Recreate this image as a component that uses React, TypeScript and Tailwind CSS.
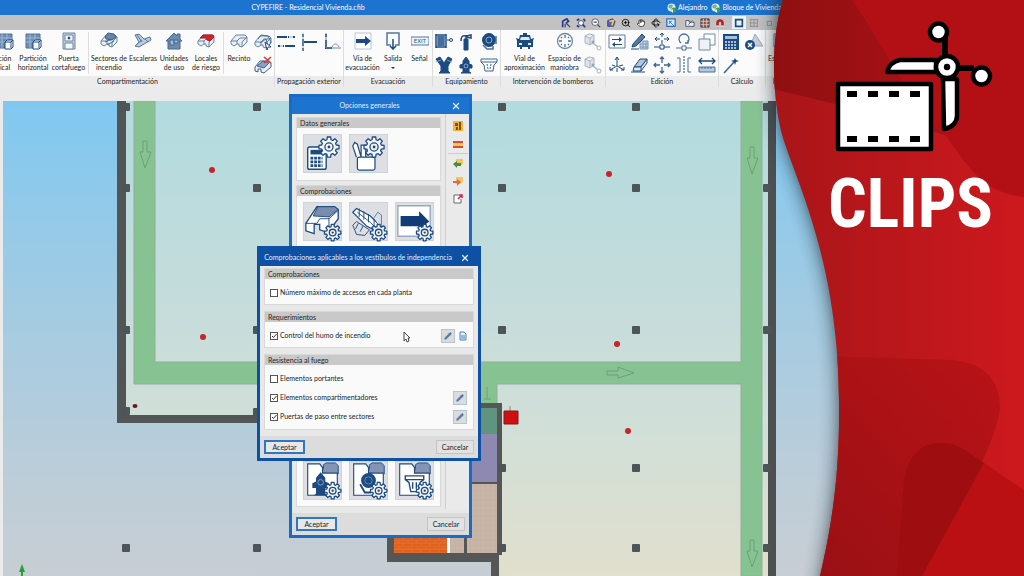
import { useState } from 'react';
import type { ReactNode } from 'react';
import { Hand, Pencil, Rotate3d, X, ZoomIn } from 'lucide-react';

const NAVY = '#1c4a82';

const gearPath = (cx: number, cy: number, outer: number, inner: number) => {
  const points: string[] = [];
  for (let i = 0; i < 8; i++) {
    const base = (i * Math.PI) / 4;
    [
      [-0.27, inner],
      [-0.17, outer],
      [0.17, outer],
      [0.27, inner],
    ].forEach(([offset, r]) => {
      points.push(`${(cx + r * Math.cos(base + offset)).toFixed(2)} ${(cy + r * Math.sin(base + offset)).toFixed(2)}`);
    });
  }
  return `M${points.join('L')}Z`;
};

const Gear = ({ cx, cy, r }: { cx: number; cy: number; r: number }) => (
  <g stroke={NAVY} strokeWidth="1.4" strokeLinejoin="round" fill="#f4f5f7">
    <path d={gearPath(cx, cy, r, r * 0.74)} />
    <circle cx={cx} cy={cy} r={r * 0.4} />
    <circle cx={cx} cy={cy} r={r * 0.14} fill={NAVY} stroke="none" />
  </g>
);

const Icon = ({ children }: { children: ReactNode }) => (
  <svg viewBox="0 0 18 18" className="h-[18px] w-[18px] shrink-0" fill="none" stroke={NAVY} strokeWidth="1" aria-hidden="true">
    {children}
  </svg>
);

const block = (
  <>
    <path d="M1 9L6 3h9l2 2v5l-5 5-3-1v-2H7l-3 2-3-2z" fill="#e8eef5" stroke="#6884a3" />
    <path d="M1 9h6l3-3h6M7 9v3M12 15v-5l5-5" stroke="#6884a3" />
  </>
);

const icons: Record<string, ReactNode> = {
  partition: (
    <Icon>
      <path d="M2 2h14v8H9v6H2z" fill="#6f8fb3" stroke="#4e7097" />
      <path d="M2 6h14M2 10h7M6 2v14M11 2v6" stroke="#9fb6cf" />
      <path d="M9 16v-6l2-2h6v7l-2 2H9zM9 10h6v6M15 10l2-2" fill="#fff" />
    </Icon>
  ),
  door: (
    <Icon>
      <path d="M3 1h12v16H3z" fill="#c2cfdd" stroke="#7289a4" />
      <path d="M5 3h8v6H5zM5 11h8v6H5z" fill="#f5f8fb" stroke="#7289a4" />
      <circle cx="9" cy="6" r="1" fill={NAVY} />
    </Icon>
  ),
  sectors: (
    <Icon>
      {block}
      <path d="M5 5l3-4 6 1 2 3-4 3-6-1z" fill="#6683a8" stroke="#3b5d87" />
      <path d="M5 10l8-3M7 13l7-4" stroke="#47698f" />
    </Icon>
  ),
  stairs: (
    <Icon>
      <path d="M1 3l4-1 5 5 6-2 1 3-7 4-5 3-4-1 4-4z" fill="#b9cade" stroke="#55779e" />
      <path d="M3 3l5 7M2 13l6-5M11 7l3 3" stroke="#55779e" />
    </Icon>
  ),
  house: (
    <Icon>
      <path d="M1 9l8-8 3 3V2h3v5l2 2h-2v8H3V9z" fill="#6d8bae" stroke="#47698f" />
      <path d="M5 8h4v5H5zM9 8h4v3H9z" fill="#a6bbd2" stroke="#47698f" />
    </Icon>
  ),
  risk: (
    <Icon>
      {block}
      <path d="M3 6l3-3h10l1 2-4 4-3-1-1-2H4z" fill="#d2222a" stroke="#b3161d" />
    </Icon>
  ),
  enclosure: <Icon>{block}</Icon>,
  enclosures: (
    <Icon>
      {block}
      <path d="M4 6l3-4 7 1 3 6-2 4M6 10l6-4 2 7" stroke="#47698f" />
      <path d="M11 9l6 5h-3l-1 3z" fill="#fff" />
    </Icon>
  ),
  removeEnclosure: (
    <Icon>
      <path d="M1 11l5-6h8l3 2v4l-7 6-3-1v-3H4v3l-3-1z" fill="#e8eef5" stroke="#3f6088" />
      <path d="M3 10l6-5 6 2-5 5z" fill="#8aa2be" stroke="#3f6088" />
      <path d="M10 1l7 6M17 1l-7 6" stroke="#d23a3a" strokeWidth="1.6" />
    </Icon>
  ),
  facadeH: (
    <Icon>
      <path d="M0 4h10M8 13h10" strokeWidth="2" />
      <path d="M12 4h6M1 13h6" stroke="#9fb4ca" />
      <path d="M11 4h1M16 4h2M1 13h2M6 13h1" strokeWidth="2" />
    </Icon>
  ),
  facadeV: (
    <Icon>
      <path d="M3 1v3M3 6v7M3 15v3" strokeWidth="2" />
      <path d="M3 9h14" strokeWidth="2" />
      <path d="M3 0v18" stroke="#9fb4ca" />
    </Icon>
  ),
  facadeCorner: (
    <Icon>
      <path d="M3 1v3M3 7v8h6" strokeWidth="2" />
      <path d="M3 0v15h15M9 14c2-4 5-4 7 0" stroke="#6f8cab" />
    </Icon>
  ),
  route: (
    <Icon>
      <path d="M1 1h16v16H1z" fill="#fff" stroke="#b6c4d4" />
      <path d="M2 7h9V4l6 5-6 5v-3H2z" fill={NAVY} stroke="none" />
    </Icon>
  ),
  exit: (
    <Icon>
      <path d="M7 13H3V1h12v12h-4" stroke="#55779e" strokeWidth="1.5" />
      <path d="M9 7v10M6 14l3 3 3-3" strokeWidth="1.5" />
    </Icon>
  ),
  sign: (
    <svg viewBox="0 0 18 18" className="h-[18px] w-[18px]" aria-hidden="true">
      <path d="M0 5h18v8H0z" fill="#edf3fa" stroke="#55779e" />
      <text x="9" y="11" textAnchor="middle" fontSize="6" fontFamily="Roboto, sans-serif" fill="#2f5c91">EXIT</text>
    </svg>
  ),
  hose: (
    <Icon>
      <path d="M1 1v14M11 1v14M1 2h10M1 14h10" strokeWidth="1.5" />
      <path d="M2 3h8v10H2z" fill="#6f90b7" stroke="none" />
      <path d="M4 3v10M6 3v10M8 3v10M12 7h3" />
      <circle cx="16" cy="7" r="1.5" />
    </Icon>
  ),
  extinguisher: (
    <Icon>
      <path d="M7 6h4v11H7z" fill={NAVY} />
      <path d="M9 6V2M4 8c0-5 2-6 5-5l5-1v3L9 4" strokeWidth="1.5" />
    </Icon>
  ),
  alarm: (
    <Icon>
      <circle cx="9" cy="7" r="6.500" fill={NAVY} />
      <circle cx="9" cy="7" r="3" stroke="#8ca9cb" />
      <path d="M3 12l4 4h6v-3M16 3v8" stroke="#4a6e9b" strokeWidth="1.5" />
    </Icon>
  ),
  siamese: (
    <Icon>
      <path d="M1 3l4-2 4 6 4-6 4 2-4 7v5l2 2H4l2-2v-5z" fill={NAVY} />
      <path d="M1 6l5-2M17 6l-5-2" stroke="#7e9dc2" />
    </Icon>
  ),
  hydrant: (
    <Icon>
      <path d="M9 1l3 4v3l3 1v3h-3v4l2 1H4l2-1v-4H3V9l3-1V5z" fill={NAVY} />
      <circle cx="9" cy="10" r="2" stroke="#8ca9cb" />
    </Icon>
  ),
  sprinkler: (
    <Icon>
      <path d="M1 3h16v3l-3 3-1 6H5L4 9 1 6zM1 6h16" stroke="#3d6593" />
      <path d="M7 8l1 5M11 8l-1 5" stroke="#3d6593" strokeDasharray="2 1" />
    </Icon>
  ),
  truck: (
    <Icon>
      <path d="M7 1h4v2h3l1 4 3-1-1 3v6h-3v2h-2v-2H6v2H4v-2H1V9L0 6l3 1 1-4h3z" fill={NAVY} stroke="none" />
      <path d="M5 5h8l1 3H4zM3 11h3v2H3zM12 11h3v2h-3z" fill="#dfe9f4" stroke="none" />
    </Icon>
  ),
  maneuver: (
    <Icon>
      <circle cx="9" cy="9" r="7.5" stroke="#7189a3" strokeWidth="1.3" />
      <path d="M9 3v3M9 12v3M3 9h3M12 9h3M5 5l1 1M12 12l1 1M13 5l-1 1M5 13l1-1" stroke="#4a6e9b" strokeWidth="1.3" />
    </Icon>
  ),
  linkBox: (
    <Icon>
      <path d="M1 3l4-2 5 1v7l-4 3-5-2zM1 3l5 2 4-3M6 5v7" fill="#dfe3e8" stroke="#a9b4c0" />
      <path d="M9 10l5 4" stroke="#a9b4c0" strokeWidth="1.5" />
      <circle cx="15" cy="15" r="2" fill="#fff" stroke="#a9b4c0" />
      <circle cx="9" cy="9" r="1.5" fill="#8ea4bb" stroke="none" />
    </Icon>
  ),
  editBox: (
    <Icon>
      <path d="M1 2h16v13H1z" stroke="#5f7fa3" />
      <path d="M4 6h7V4l3 2.500-3 2.500V7H4zM14 11H7V9l-3 2.500L7 14v-2h7z" fill={NAVY} stroke="none" />
    </Icon>
  ),
  pencilTable: (
    <Icon>
      <path d="M9 8h8v8H9zM9 11h8M9 14h8M12 8v8M15 8v8" fill="#cddbea" stroke="#7896b8" />
      <path d="M2 11L11 1l3 3-9 9-4 1z" fill="#55799f" />
      <path d="M0 16h8" />
    </Icon>
  ),
  moveNode: (
    <Icon>
      <path d="M9 0v4M9 7v4M3 6h4M11 6h4M7 2l2-2 2 2M4 4L2 6l2 2M14 4l2 2-2 2" />
      <path d="M1 14h6M11 14h6M7 12h4v4H7z" />
    </Icon>
  ),
  rotateNode: (
    <Icon>
      <path d="M6 10a5 5 0 1 1 6 0M10 10h3V7" stroke="#4a6e9b" strokeWidth="1.3" />
      <path d="M1 15h6M11 15h6M7 13h4v4H7z" stroke="#4a6e9b" />
    </Icon>
  ),
  copy: (
    <Icon>
      <path d="M6 1h11v11H6z" fill="#fff" stroke="#7189a3" />
      <path d="M1 6h11v11H1z" fill="#eef1f5" stroke="#7189a3" />
    </Icon>
  ),
  rotate: (
    <Icon>
      <path d="M9 10V2M7 4l2-3 2 3M9 10l-7 4M2 11v3h3M9 10l7 4M16 11v3h-3" />
      <path d="M4 9l3 1M11 10l4-1M9 12v4" />
    </Icon>
  ),
  eraser: (
    <Icon>
      <path d="M3 11l6-8h7l-6 8z" fill="#b2c3d7" />
      <path d="M3 11h7v4H2zM10 11l6-8v4l-6 8M0 16h14" fill="#dfe7f0" />
    </Icon>
  ),
  move: (
    <Icon>
      <path d="M9 1v6M9 11v6M1 9h6M11 9h6M7 3l2-2 2 2M7 15l2 2 2-2M3 7L1 9l2 2M15 7l2 2-2 2" stroke="#3d6593" strokeWidth="1.3" />
    </Icon>
  ),
  mirror: (
    <Icon>
      <path d="M9 0v18" strokeDasharray="2 1" />
      <path d="M2 2h3v14H2M16 2h-3v14h3" stroke="#4a6e9b" />
    </Icon>
  ),
  measure: (
    <Icon>
      <path d="M1 5h16M4 2L1 5l3 3M14 2l3 3-3 3" strokeWidth="1.3" />
      <path d="M1 11h16v5H1zM4 11v2M7 11v2M10 11v2M13 11v2" fill="#b7c9dd" stroke="#4a6e9b" />
    </Icon>
  ),
  calculator: (
    <Icon>
      <path d="M1 1h16v16H1z" fill={NAVY} stroke="none" />
      <path d="M3 3h12v3H3z" fill="#a8bfda" stroke="none" />
      <path d="M3 9h12M3 12h12M3 15h12" stroke="#d7e3f0" strokeDasharray="2 1" strokeWidth="1.5" />
    </Icon>
  ),
  calcError: (
    <Icon>
      <path d="M10 1l8 12H5z" fill="#c7ced6" stroke="#9eabb8" />
      <circle cx="5" cy="12" r="5" fill={NAVY} stroke="none" />
      <path d="M3 10l4 4M7 10l-4 4" stroke="#fff" strokeWidth="1.5" />
    </Icon>
  ),
  wand: (
    <Icon>
      <path d="M2 17L13 5" stroke="#4a6e9b" strokeWidth="1.800" />
      <path d="M13 2l1 2 3 1-3 1-1 3-1-3-3-1 3-1z" fill={NAVY} stroke="none" />
    </Icon>
  ),
};

const Tool = ({ icon, lines, className, menu }: { icon: string; lines: string[]; className: string; menu?: boolean }) => (
  <button type="button" className={`flex shrink-0 flex-col items-center whitespace-nowrap pt-0.5 ${className}`}>
    {icons[icon]}
    <span className="mt-1 leading-[9px]">
      {lines.map((line) => (
        <span key={line} className="block">{line}</span>
      ))}
    </span>
    {menu && <span className="mt-1 border-x-2 border-t-2 border-x-transparent border-t-[#333]" />}
  </button>
);

const IconTool = ({ icon, label }: { icon: string; label: string }) => (
  <button type="button" aria-label={label} className="flex h-[23px] items-center justify-center">
    {icons[icon]}
  </button>
);

const Group = ({ title, className, titleClass = '', children }: { title: string; className: string; titleClass?: string; children: ReactNode }) => (
  <section className={`flex shrink-0 flex-col border-r border-[#dcdcdc] ${className}`}>
    <div className="flex h-[46px] justify-center">{children}</div>
    <h2 className={`h-[11px] whitespace-nowrap bg-[#ececec] text-center leading-[10px] ${titleClass}`}>{title}</h2>
  </section>
);

const Divider = () => <div className="mx-px my-0.5 w-px bg-[#dedede]" />;

const Ribbon = () => (
  <div className="flex h-[57px] shrink-0 overflow-hidden bg-[#fbfbfb] text-[7px] text-[#222]">
    <Group title="Compartimentación" className="w-[275px]" titleClass="pr-[19px]">
      <div className="flex w-[15px] shrink-0 justify-end">
        <Tool icon="partition" lines={['ción', 'ical']} className="w-[22px]" />
      </div>
      <Tool icon="partition" lines={['Partición', 'horizontal']} className="w-[34px]" />
      <Tool icon="door" lines={['Puerta', 'cortafuego']} className="w-[37px]" />
      <Divider />
      <Tool icon="sectors" lines={['Sectores de', 'incendio']} className="w-[38px]" />
      <Tool icon="stairs" lines={['Escaleras']} className="w-[30px]" />
      <Tool icon="house" lines={['Unidades', 'de uso']} className="w-[32px]" />
      <Tool icon="risk" lines={['Locales', 'de riesgo']} className="w-[32px]" />
      <Divider />
      <Tool icon="enclosure" lines={['Recinto']} className="w-[28px]" />
      <div className="grid w-5">
        <IconTool icon="enclosures" label="Recintos" />
        <IconTool icon="removeEnclosure" label="Borrar recinto" />
      </div>
    </Group>
    <Group title="Propagación exterior" className="w-[69px]">
      <div className="grid w-full grid-cols-3">
        <IconTool icon="facadeH" label="Fachadas enfrentadas" />
        <IconTool icon="facadeV" label="Encuentro con fachada" />
        <IconTool icon="facadeCorner" label="Encuentro con cubierta" />
      </div>
    </Group>
    <Group title="Evacuación" className="w-[89px]">
      <Tool icon="route" lines={['Vía de', 'evacuación']} className="w-[37px]" />
      <Tool icon="exit" lines={['Salida']} className="w-[24px]" menu />
      <Divider />
      <Tool icon="sign" lines={['Señal']} className="w-[25px]" />
    </Group>
    <Group title="Equipamiento" className="w-[68px]">
      <div className="grid w-full grid-cols-3">
        <IconTool icon="hose" label="Boca de incendio" />
        <IconTool icon="extinguisher" label="Extintor" />
        <IconTool icon="alarm" label="Alarma" />
        <IconTool icon="siamese" label="Columna seca" />
        <IconTool icon="hydrant" label="Hidrante" />
        <IconTool icon="sprinkler" label="Rociador" />
      </div>
    </Group>
    <Group title="Intervención de bomberos" className="w-[105px]">
      <Tool icon="truck" lines={['Vial de', 'aproximación']} className="w-[43px]" />
      <Tool icon="maneuver" lines={['Espacio de', 'maniobra']} className="w-[37px]" />
      <div className="grid w-5">
        <IconTool icon="linkBox" label="Vincular vial" />
        <IconTool icon="linkBox" label="Vincular espacio" />
      </div>
    </Group>
    <Group title="Edición" className="w-[113px]">
      <div className="grid w-full grid-cols-5">
        <IconTool icon="editBox" label="Editar" />
        <IconTool icon="pencilTable" label="Asignar" />
        <IconTool icon="moveNode" label="Mover nudo" />
        <IconTool icon="rotateNode" label="Girar nudo" />
        <IconTool icon="copy" label="Copiar" />
        <IconTool icon="rotate" label="Girar" />
        <IconTool icon="eraser" label="Borrar" />
        <IconTool icon="move" label="Mover" />
        <IconTool icon="mirror" label="Simetría" />
        <IconTool icon="measure" label="Medir" />
      </div>
    </Group>
    <Group title="Cálculo" className="w-[47px]">
      <div className="grid w-full grid-cols-2">
        <IconTool icon="calculator" label="Calcular" />
        <IconTool icon="calcError" label="Errores" />
        <IconTool icon="wand" label="Comprobar" />
      </div>
    </Group>
    <Group title="Resultados" className="w-[48px]">
      <Tool icon="editBox" lines={['Esquema']} className="mr-auto w-[32px]" />
    </Group>
  </div>
);

const Globe = () => (
  <svg viewBox="0 0 10 10" className="h-2.5 w-2.5" aria-hidden="true">
    <circle cx="4.500" cy="4.500" r="4" fill="#dcebf2" />
    <path d="M1 4c2-3 4-3 5-1L4 6z" fill="#79b08c" />
    <circle cx="7" cy="7" r="2.500" fill="#3fa045" />
    <path d="M4 8l2-2v4z" fill="#fff" />
  </svg>
);

const TitleBar = () => (
  <header className="grid h-[15px] shrink-0 grid-cols-[616px_1fr] items-center bg-[#1c74d0] text-[7px] text-white">
    <h1 className="text-center">CYPEFIRE - Residencial Vivienda.cfib</h1>
    <div className="flex items-center gap-1 whitespace-nowrap pl-[51px]">
      <span className="flex items-center gap-px"><Globe />Alejandro</span>
      <span className="flex items-center gap-px"><Globe />Bloque de Viviendas</span>
    </div>
  </header>
);

const quickIcons: { label: string; icon: ReactNode }[] = [
  { label: 'Vista previa', icon: <><path d="M2 11V4l5-3 2 3-3 2" stroke="#26388f" strokeWidth="2" /><path d="M6 6l5 5M5 11V7" strokeWidth="1.500" /></> },
  { label: 'Zoom todo', icon: <><circle cx="6" cy="6" r="3" fill="#fff" /><path d="M1 3l3-2M9 1l2 3M1 9l3 2M8 8l3 3" stroke="#26388f" strokeWidth="2" /></> },
  { label: 'Zoom doble', icon: <><circle cx="5" cy="5" r="4" fill="#fff" /><path d="M8 8l3 3M3 5h4" strokeWidth="1.500" /></> },
  { label: 'Redibujar', icon: <><path d="M2 10V3l6-2 3 3-2 6z" fill="#5560b8" /><path d="M4 4l5-1-2 6" stroke="#f3c46d" strokeWidth="2" /></> },
  { label: 'Ampliar', icon: <ZoomIn x="0" y="0" width="12" height="12" /> },
  { label: 'Encuadrar', icon: <Hand x="1" y="1" width="10" height="10" fill="#fff" /> },
  { label: 'Orbitar', icon: <Rotate3d x="0" y="0" width="12" height="12" /> },
  { label: 'Ventana', icon: <><path d="M1 1h10v9H1z" fill="#dceafa" stroke="#2b6ebf" strokeWidth="1.500" /><path d="M4 4l6 6M4 7V4h3" stroke="#2b6ebf" /></> },
  { label: 'Plantillas', icon: <><path d="M1 10V3h4v2h6v5z" fill="#eee" /><path d="M4 8l5-5" /></> },
  { label: 'Capas', icon: <><path d="M1 1h10v10H1z" fill="#8b5550" /><path d="M1 4h10M1 8h10M4 1v10M8 1v10" stroke="#e4cfc2" /></> },
  { label: 'Captura', icon: <><path d="M3 11V6a3 3 0 0 1 6 0v5" stroke="#b51f26" strokeWidth="3" /><path d="M1 10h4M7 10h4" stroke="#ddd" strokeWidth="2" /></> },
  { label: 'Ortogonal', icon: <path d="M2 2h8v8H2z" stroke="#1c4a82" strokeWidth="2" /> },
  { label: 'Rejilla', icon: <path d="M1 2h10M1 6h10M1 10h10M2 1v10M6 1v10M10 1v10" stroke="#8c8c8c" /> },
  { label: 'Marcas', icon: <path d="M4 4h5v5H4z" stroke="#888" /> },
];

const QuickBar = () => (
  <div className="flex h-[15px] shrink-0 items-center gap-px bg-[#c2c2c2] pl-[559px]">
    {quickIcons.map(({ label, icon }, i) => (
      <button
        key={label}
        type="button"
        aria-label={label}
        className={`flex h-[13px] w-3.5 shrink-0 items-center justify-center ${
          i === 8 || i === 11 ? 'ml-1' : ''
        } ${i === 11 ? 'bg-[#eaf2fb]' : ''}`}
      >
        <svg viewBox="0 0 12 12" className="h-2.5 w-2.5" fill="none" stroke="#3c4660">{icon}</svg>
      </button>
    ))}
  </div>
);

const columns = [
  [257, 107], [257, 188], [257, 330], [257, 412], [126, 548], [257, 548],
  [126, 107], [126, 188], [126, 330], [126, 411],
  [502, 107], [502, 188], [502, 330], [502, 468], [502, 548],
  [636, 107], [636, 188], [636, 330], [636, 468], [636, 548],
  [767, 107], [767, 188], [767, 330], [767, 468], [767, 548],
];

const detectors = [[212, 170], [203, 337], [609, 174], [617, 344], [628, 431]];

const Arrow = ({ x, y, angle = 0 }: { x: number; y: number; angle?: number }) => (
  <path d="M-2-14h4V-3h4L0 13-5-3h3z" fill="none" stroke="#6aa277" transform={`translate(${x} ${y}) rotate(${angle})`} />
);

const FloorPlan = () => (
  <svg viewBox="3 101 1021 475" preserveAspectRatio="xMinYMin slice" className="absolute inset-0 h-full w-full" role="img" aria-label="Planta del edificio">
    <defs>
      <linearGradient id="sky" x1="0" y1="0" x2="0" y2="1">
        <stop offset="0" stopColor="#80c8f1" />
        <stop offset="0.45" stopColor="#a4cbe1" />
        <stop offset="0.8" stopColor="#bdcdd9" />
        <stop offset="1" stopColor="#c8ced3" />
      </linearGradient>
      <linearGradient id="room" gradientUnits="userSpaceOnUse" x1="0" y1="101" x2="0" y2="576">
        <stop offset="0" stopColor="#b2dbe0" />
        <stop offset="0.4" stopColor="#c4dcdb" />
        <stop offset="0.7" stopColor="#d2dfd8" />
        <stop offset="1" stopColor="#e1dfcd" />
      </linearGradient>
      <pattern id="brick" width="9" height="6" patternUnits="userSpaceOnUse">
        <rect width="9" height="6" fill="#e0601c" />
        <path d="M0 0h9M0 3h9M3 0v3M7 3v3" stroke="#e8763a" strokeWidth="0.8" />
      </pattern>
      <pattern id="tile" width="5" height="5" patternUnits="userSpaceOnUse">
        <rect width="5" height="5" fill="#c8b5a8" />
        <path d="M0 0h5M0 0v5" stroke="#bca99d" strokeWidth="0.6" />
      </pattern>
    </defs>
    <rect x="3" y="101" width="1021" height="475" fill="url(#sky)" />
    <path d="M126 101H768V576H498V415H126z" fill="url(#room)" />
    <path d="M134 101h21v261h586V101h21v475h-21V384H497v20h-24v-20H134z" fill="#87c392" stroke="#92ad9b" />
    <path d="M117 101h9v314h170v8H117z" fill="#525555" />
    <path d="M768 101h8v475h-8z" fill="#4c5051" />
    <path d="M472 407h25v27h-25z" fill="#5f957e" />
    <path d="M466 434h32v49h-32z" fill="#8d89b0" />
    <path d="M450 484h48v70h-48z" fill="url(#tile)" />
    <path d="M394 530h53v24h-53z" fill="url(#brick)" />
    <path d="M447 530h3v24h-3z" fill="#fff" />
    <path d="M476 403h26v152h-3v21h-8v-14H387v-30h7v21h70v-40h3v40h30v-69h-25v-2h25v-74h-21z" fill="#555757" />
    {columns.map(([x, y]) => (
      <rect key={`${x}-${y}`} x={x - 4} y={y - 4} width="8" height="8" rx="1" fill="#4d5558" />
    ))}
    {detectors.map(([x, y]) => (
      <circle key={`${x}-${y}`} cx={x} cy={y} r="3" fill="#c4262a" />
    ))}
    <ellipse cx="135" cy="406" rx="2.500" ry="2" fill="#6b1a1d" />
    <path d="M510 406v6" stroke="#888" />
    <path d="M504 411h14v13h-14z" fill="#cf1010" stroke="#8e1414" />
    <Arrow x={145} y={155} />
    <Arrow x={752} y={161} />
    <Arrow x={752} y={554} />
    <Arrow x={621} y={373} angle={-90} />
    <path d="M487 387v12M484 399h7" stroke="#6aa277" />
    <path d="M22 564l3 8h-2v4h-2v-4h-2z" fill="#1fa43a" />
  </svg>
);

const WindowTitle = ({ title, color, onClose }: { title: string; color: string; onClose: () => void }) => (
  <div className={`flex h-[17px] shrink-0 items-center pl-1 text-[#e4eefb] ${color}`}>
    <h2 className="flex-1 whitespace-nowrap text-center">{title}</h2>
    <button type="button" aria-label="Cerrar" onClick={onClose} className="flex w-[26px] shrink-0 justify-center">
      <X className="h-2.5 w-2.5" strokeWidth={3} />
    </button>
  </div>
);

const Panel = ({ title, className = '', children }: { title: string; className?: string; children: ReactNode }) => (
  <fieldset className={`flex min-w-0 flex-col border border-[#d9d9d9] bg-[#fafafa] ${className}`}>
    <legend className="contents">
      <span className="block h-2.5 shrink-0 bg-[#c9c9c9] pl-[3px] leading-[10px]">{title}</span>
    </legend>
    {children}
  </fieldset>
);

const Footer = ({ onClose }: { onClose: () => void }) => (
  <div className="flex h-[22px] shrink-0 items-center justify-between bg-[#dcdcdc] px-1">
    <button type="button" onClick={onClose} className="h-3.5 w-[41px] border-2 border-[#3376bd] bg-[#e6e8ea] leading-[10px]">Aceptar</button>
    <button type="button" onClick={onClose} className="h-3.5 w-[38px] border border-[#c4c4c4] bg-[#e2e2e2] leading-[10px]">Cancelar</button>
  </div>
);

const folder = (
  <>
    <path d="M19 12l2-5V3l3-2h10l3 3v9z" fill="#8494b4" stroke={NAVY} />
    <path d="M4 36V2h13l3 4v6h16v24z" fill="#fff" stroke={NAVY} strokeWidth="1.200" />
  </>
);

const tiles: Record<string, ReactNode> = {
  general: (
    <>
      <rect x="4" y="13" width="20" height="24" rx="2" fill="#fff" stroke={NAVY} strokeWidth="1.500" />
      <path d="M7 16h14v5H7z" fill={NAVY} />
      <path d="M7 25h13M7 29h13M7 33h13" stroke={NAVY} strokeWidth="3" strokeDasharray="3 1" />
      <Gear cx={27} cy={13} r={11} />
    </>
  ),
  style: (
    <>
      <path d="M7 24L3 12l2-4 3 2 4 14M12 24V11h5v13" fill="#fff" stroke={NAVY} strokeWidth="1.300" />
      <rect x="8" y="24" width="19" height="14" rx="2" fill="#fff" stroke={NAVY} strokeWidth="1.300" />
      <Gear cx={26} cy={13} r={11} />
    </>
  ),
  sectors: (
    <>
      <path d="M2 22L14 4h19l4 3v10L26 32l-9-3v-6h-6v10l-9-3z" fill="#fff" stroke={NAVY} strokeWidth="1.400" />
      <path d="M10 14l5-10h18l4 3-10 8z" fill="#7a8cad" stroke={NAVY} />
      <path d="M2 22h12l3-5h10l10-9M27 16v14" fill="none" stroke={NAVY} />
      <Gear cx={31} cy={32} r={9} />
    </>
  ),
  stairs: (
    <>
      <path d="M3 10l4-4 15 8 13 13-4 5-13-7z" fill="#fff" stroke={NAVY} strokeWidth="1.300" />
      <path d="M3 24l4-4 14 9-5 6-9-1zM8 10l13 10 9 9M10 6v9M15 9v9M20 12v9M26 17v8M9 22l-3 6M14 25l-3 6" fill="none" stroke={NAVY} />
      <path d="M26 16l4-6 4 3v16" fill="#dbe1e9" stroke="#647895" />
      <Gear cx={31} cy={32} r={9} />
    </>
  ),
  lobby: (
    <>
      <path d="M2 3h35v33H2z" fill="#fff" stroke="#97a9c2" strokeWidth="1.500" />
      <path d="M5 14h20V9l11 11-11 8v-3H5z" fill="#123c75" />
      <Gear cx={31} cy={32} r={9} />
    </>
  ),
  hydrants: (
    <>
      {folder}
      <path d="M18 11l5 6v4l4 2v5h-4v6l3 2H11l2-2v-6H9v-5l4-2v-4z" fill={NAVY} />
      <circle cx="18" cy="22" r="3" fill="none" stroke="#8aa4c3" />
      <Gear cx={31} cy={31} r={9} />
    </>
  ),
  alarms: (
    <>
      {folder}
      <circle cx="20" cy="20" r="8" fill={NAVY} />
      <circle cx="20" cy="20" r="4" fill="none" stroke="#6988b1" />
      <path d="M11 24l5 9h7" fill="none" stroke={NAVY} strokeWidth="2" />
      <Gear cx={31} cy={31} r={9} />
    </>
  ),
  sprinklers: (
    <>
      {folder}
      <path d="M10 15h20v4l-4 3-2 10h-8l-2-10-4-3zM10 19h20M18 22v7M22 22v7" fill="#fff" stroke={NAVY} strokeWidth="1.500" />
      <Gear cx={31} cy={31} r={9} />
    </>
  ),
};

const TileRow = ({ items }: { items: { id: string; label: string }[] }) => (
  <div className="flex gap-[7px] px-1.5">
    {items.map(({ id, label }) => (
      <button key={id} type="button" aria-label={label} className="h-[39px] w-[39px] border border-[#cfd2d6] bg-[#dedfe2]">
        <svg viewBox="0 0 40 40" className="h-full w-full overflow-visible">{tiles[id]}</svg>
      </button>
    ))}
  </div>
);

const OptionsWindow = () => (
  <section className="absolute left-[289px] top-[94px] flex h-[444px] w-[183px] flex-col border-[3px] border-[#1a6bc6] bg-[#e8e8e8] text-[7px] text-[#222]">
    <WindowTitle title="Opciones generales" color="bg-[#1c74d0]" onClose={() => {}} />
    <div className="flex min-h-0 flex-1">
      <div className="flex flex-1 flex-col gap-1 px-1 pb-1.5 pt-[3px]">
        <Panel title="Datos generales" className="h-16 shrink-0 pb-1">
          <div className="pt-1.5">
            <TileRow items={[{ id: 'general', label: 'Datos de la obra' }, { id: 'style', label: 'Apariencia' }]} />
          </div>
        </Panel>
        <Panel title="Comprobaciones" className="flex-1">
          <div className="flex flex-1 flex-col justify-between pb-1.5 pt-1.5">
            <TileRow items={[{ id: 'sectors', label: 'Sectores' }, { id: 'stairs', label: 'Escaleras' }, { id: 'lobby', label: 'Vestíbulos' }]} />
            <TileRow items={[{ id: 'hydrants', label: 'Hidrantes' }, { id: 'alarms', label: 'Alarmas' }, { id: 'sprinklers', label: 'Rociadores' }]} />
          </div>
        </Panel>
      </div>
      <div className="mb-1 flex w-[26px] flex-col items-center gap-2 border-l border-[#d0d0d0] bg-[#eaeaea] pt-[7px]">
        <button type="button" aria-label="Normativa"><svg viewBox="0 0 10 10" className="h-2.5 w-2.5"><path d="M0 0h10v10H0z" fill="#f2b23d" /><path d="M2 2h3v3H2zM6 1h2v8H6zM3 6h2v3H3z" fill="#7b5317" /></svg></button>
        <button type="button" aria-label="España"><svg viewBox="0 0 10 10" className="h-2.5 w-2.5"><path d="M0 2h10v7H0z" fill="#db4b32" /><path d="M0 4h10v3H0z" fill="#f6ca52" /></svg></button>
        <span className="-my-1 h-px w-5 shrink-0 bg-[#cccccc]" />
        <button type="button" aria-label="Importar"><svg viewBox="0 0 10 10" className="h-2.5 w-2.5"><path d="M3 1h7v5l-3 2H3z" fill="#eec75e" /><path d="M0 6l4-3v2h4v3H4v2z" fill="#3d9235" /></svg></button>
        <button type="button" aria-label="Exportar"><svg viewBox="0 0 10 10" className="h-2.5 w-2.5"><path d="M3 1h7v5l-3 2H3z" fill="#eec75e" /><path d="M8 6L4 3v2H0v2h4v3z" fill="#e06a43" /></svg></button>
        <button type="button" aria-label="Abrir"><svg viewBox="0 0 10 10" className="h-2.5 w-2.5"><path d="M6 1H1v8h7V5" fill="#fff" stroke="#666" /><path d="M5 5l4-4M6 1h3v3" fill="none" stroke="#d62345" strokeWidth="1.500" /></svg></button>
      </div>
    </div>
    <Footer onClose={() => {}} />
  </section>
);

const PencilButton = ({ label }: { label: string }) => (
  <button type="button" aria-label={label} className="flex h-3.5 w-3.5 items-center justify-center border border-[#b9c3cd] bg-[#d8dde2]">
    <Pencil className="h-2 w-2 text-[#5c7897]" fill="#5c7897" />
  </button>
);

const Option = ({ label, initial = false, children }: { label: string; initial?: boolean; children?: ReactNode }) => {
  const [checked, setChecked] = useState(initial);

  return (
    <div className="flex h-[19px] items-center justify-between pl-[5px] pr-1.5">
      <label className="flex items-center gap-0.5 whitespace-nowrap">
        <span className="grid">
          <input
            type="checkbox"
            checked={checked}
            onChange={(e) => setChecked(e.target.checked)}
            className="col-start-1 row-start-1 h-2 w-2 appearance-none border border-[#555] bg-white"
          />
          {checked && (
            <svg viewBox="0 0 8 8" className="pointer-events-none col-start-1 row-start-1 h-2 w-2" fill="none" stroke="#333">
              <path d="M2 4l1.500 1.500L6.500 2" />
            </svg>
          )}
        </span>
        {label}
      </label>
      {children}
    </div>
  );
};

const ChecksWindow = () => (
  <section className="absolute left-[257px] top-[246px] flex h-[215px] w-[224px] flex-col border-[3px] border-[#0d50a4] bg-[#e8e8e8] text-[7px] text-[#222]">
    <WindowTitle title="Comprobaciones aplicables a los vestíbulos de independencia" color="bg-[#0d50a4]" onClose={() => {}} />
    <div className="flex flex-1 flex-col gap-1.5 px-1 pt-0.5">
      <Panel title="Comprobaciones" className="h-[37px]">
        <div className="pt-1"><Option label="Número máximo de accesos en cada planta" /></div>
      </Panel>
      <Panel title="Requerimientos" className="h-[37px]">
        <div className="pt-1">
          <Option label="Control del humo de incendio" initial>
            <span className="flex items-center gap-1">
              <PencilButton label="Editar control del humo" />
              <button type="button" aria-label="Ver documento">
                <svg viewBox="0 0 8 10" className="h-2.5 w-2" fill="#e4f0fb" stroke="#4b84ba">
                  <path d="M1 1h4l2 2v6H1zM2 5h4M2 7h4" />
                </svg>
              </button>
            </span>
          </Option>
        </div>
      </Panel>
      <Panel title="Resistencia al fuego" className="h-[76px]">
        <div className="pt-1">
          <Option label="Elementos portantes" />
          <Option label="Elementos compartimentadores" initial><PencilButton label="Editar elementos" /></Option>
          <Option label="Puertas de paso entre sectores" initial><PencilButton label="Editar puertas" /></Option>
        </div>
      </Panel>
    </div>
    <Footer onClose={() => {}} />
    <svg viewBox="0 0 8 12" className="pointer-events-none absolute left-[143px] top-[82px] h-3 w-2" fill="#fff" stroke="#444">
      <path d="M1 1v9l2-2 1 3 2-1-1-3h2z" />
    </svg>
  </section>
);

const ClipsBanner = () => (
  <aside className="pointer-events-none absolute right-0 top-0 h-full w-[264px] text-white">
    <svg viewBox="760 0 264 576" preserveAspectRatio="none" className="absolute inset-0 h-full w-full overflow-visible" aria-hidden="true">
      <defs>
        <linearGradient id="red" x1="0" x2="1" y1="0" y2="0">
          <stop offset="0" stopColor="#a61518" />
          <stop offset="1" stopColor="#cd191e" />
        </linearGradient>
        <linearGradient id="corner" x1="0" x2="1" y1="0" y2="0">
          <stop offset="0" stopColor="#8d0f11" />
          <stop offset="1" stopColor="#a91215" />
        </linearGradient>
        <linearGradient id="fold" x1="0" x2="1" y1="1" y2="0">
          <stop offset="0" stopColor="#971014" />
          <stop offset="1" stopColor="#b91317" />
        </linearGradient>
        <clipPath id="edge">
          <path d="M783 0C770 40 772 100 783 138C797 183 838 262 839 400C840 470 833 520 820 576H1024V0z" />
        </clipPath>
        <filter id="shade" x="-30%" y="-10%" width="160%" height="120%">
          <feGaussianBlur stdDeviation="9" />
        </filter>
      </defs>
      <path d="M783 -30C770 40 772 100 783 138C797 183 838 262 839 400C840 470 833 520 816 606H1054V-30z" fill="#1b2a33" opacity="0.8" filter="url(#shade)" />
      <g clipPath="url(#edge)">
        <path d="M760 0h264v576H760z" fill="url(#red)" />
        <path d="M760 86L835 104 945 135V0H760z" fill="url(#corner)" />
        <path d="M852 0C890 55 910 105 946 136C970 170 985 193 1024 197V0z" fill="#b31015" />
        <path d="M820 356L955 360Q1000 366 1000 408Q998 430 976 474L922 576H800z" fill="url(#fold)" />
        <path d="M897 576L904 480Q910 443 940 443Q952 442 965 450L1024 490V576z" fill="#ba1014" />
        <path d="M897 576L904 480Q910 443 940 443Q952 442 965 450L984 463 922 576z" fill="#9e0e11" />
      </g>
      <g stroke="#000" strokeWidth="4.500" strokeLinejoin="round">
        <path d="M838 84h93v65h-93z" fill="#fff" />
        <path d="M945 61V36M950 68h24" strokeWidth="6" />
        <path d="M887 72c2-7 7-11 13-12h36v12zM943 79h14v37c0 6-5 12-13 13z" fill="#fff" />
        <circle cx="938.500" cy="32" r="8.500" fill="#fff" />
        <circle cx="981.500" cy="76" r="8.500" fill="#fff" />
        <circle cx="947" cy="67" r="11" fill="#fff" />
        <circle cx="947" cy="67" r="3.200" fill="#000" stroke="none" />
      </g>
      <path d="M847 91h10v6h-10zM868 91h10v6h-10zM889 91h10v6h-10zM910 91h10v6h-10zM847 136h10v6h-10zM868 136h10v6h-10zM889 136h10v6h-10zM910 136h10v6h-10z" />
    </svg>
    <p className="relative pl-[68px] pt-[168px] font-['Roboto_Condensed','Liberation_Sans_Narrow',Roboto,sans-serif] text-[68px] font-bold leading-[72px]">
      CLIPS
    </p>
  </aside>
);

export default function App() {
  return (
    <div className="relative flex min-h-screen w-full flex-col overflow-hidden bg-[#ebebeb] font-['Lato','Open_Sans',sans-serif]">
      <TitleBar />
      <QuickBar />
      <Ribbon />
      <main className="relative ml-[3px] mt-3.5 flex-1">
        <FloorPlan />
      </main>
      <OptionsWindow />
      <ChecksWindow />
      <ClipsBanner />
    </div>
  );
}
